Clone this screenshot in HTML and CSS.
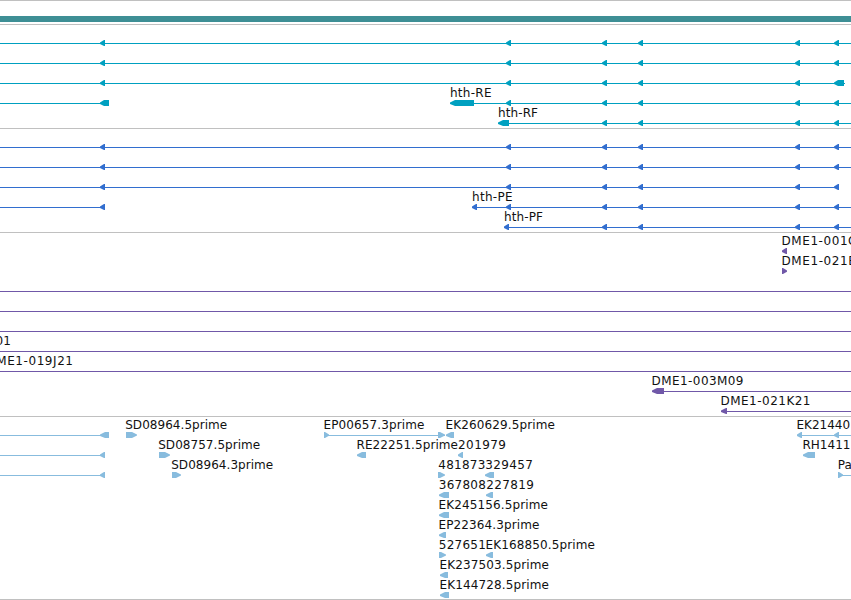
FILE: index.html
```
<!DOCTYPE html>
<html lang="en">
<head>
    <meta charset="UTF-8">
    <title>Genome Browser</title>
    <link rel="stylesheet" href="styles.css">
</head>
<body>
    <svg class="shapes">
        <defs>
            <path id="left" d="M0 17.5L4 15H5V21H4L0 19Z"/>
            <path id="right" d="M0 15H1L5 17.5V18.8L1 21H0Z"/>
            <g id="exons">
                <use href="#left" x="602"/>
                <use href="#left" x="638"/>
                <use href="#left" x="795"/>
            </g>
        </defs>
    </svg>

    <div class="tracks">
        <!-- Gene span -->
        <div class="track span-track">
            <div class="span-bar"></div>
        </div>

        <!-- Transcripts -->
        <div class="track transcripts">
            <svg class="row"><path class="line" d="M0 18.5H851"/><use href="#left" x="100"/><use href="#left" x="506"/><use href="#exons"/><use href="#left" x="834"/></svg>
            <svg class="row"><path class="line" d="M0 18.5H851"/><use href="#left" x="100"/><use href="#left" x="506"/><use href="#exons"/><use href="#left" x="834"/></svg>
            <svg class="row"><path class="line" d="M0 18.5H845"/><use href="#left" x="100"/><use href="#left" x="506"/><use href="#exons"/><path d="M834 17.5l4-2.5h6v6h-6l-4-2z"/></svg>
            <svg class="row">
                <path class="line" d="M0 18.5H105M450 18.5H851"/>
                <path d="M100 17.5l4-2.5h5v6h-5l-4-2zM450 17.5l5-2.5h19v6h-19l-5-2z"/>
                <use href="#left" x="506"/><use href="#exons"/><use href="#left" x="834"/>
                <text x="450" y="12" textLength="41.5">hth-RE</text>
            </svg>
            <svg class="row">
                <path class="line" d="M498 18.5H851"/>
                <path d="M498 17.5l5-2.5h6v6h-6l-5-2z"/>
                <use href="#exons"/><use href="#left" x="834"/>
                <text x="498" y="12" textLength="40">hth-RF</text>
            </svg>
        </div>

        <!-- Proteins -->
        <div class="track proteins">
            <svg class="row"><path class="line" d="M0 18.5H851"/><use href="#left" x="100"/><use href="#left" x="506"/><use href="#exons"/><use href="#left" x="834"/></svg>
            <svg class="row"><path class="line" d="M0 18.5H851"/><use href="#left" x="100"/><use href="#left" x="506"/><use href="#exons"/><use href="#left" x="834"/></svg>
            <svg class="row"><path class="line" d="M0 18.5H839"/><use href="#left" x="100"/><use href="#left" x="506"/><use href="#exons"/><use href="#left" x="834"/></svg>
            <svg class="row">
                <path class="line" d="M0 18.5H105M472 18.5H851"/>
                <use href="#left" x="100"/><use href="#left" x="472"/><use href="#left" x="506"/><use href="#exons"/><use href="#left" x="834"/>
                <text x="472" y="12" textLength="40.5">hth-PE</text>
            </svg>
            <svg class="row">
                <path class="line" d="M504 18.5H851"/>
                <use href="#left" x="504"/><use href="#exons"/><use href="#left" x="834"/>
                <text x="504" y="12" textLength="39">hth-PF</text>
            </svg>
        </div>

        <!-- BAC clones -->
        <div class="track clones">
            <svg class="row"><use href="#left" x="782"/><text x="781.5" y="12" textLength="75">DME1-001C</text></svg>
            <svg class="row"><use href="#right" x="782"/><text x="781.5" y="12" textLength="75">DME1-021B</text></svg>
            <svg class="row"><path class="line" d="M0 18.5H851"/></svg>
            <svg class="row"><path class="line" d="M0 18.5H851"/></svg>
            <svg class="row"><path class="line" d="M0 18.5H851"/></svg>
            <svg class="row"><path class="line" d="M0 18.5H851"/><text x="-4.5" y="12">01</text></svg>
            <svg class="row"><path class="line" d="M0 18.5H851"/><text x="-13.5" y="12" textLength="86.5">DME1-019J21</text></svg>
            <svg class="row"><path class="line" d="M652 18.5H851"/><path d="M652 17.5l5-2.5h7v6h-7l-5-2z"/><text x="651.5" y="12" textLength="92">DME1-003M09</text></svg>
            <svg class="row"><path class="line" d="M721 18.5H851"/><path d="M721 17.5l5-2.5h1v6h-1l-5-2z"/><text x="720.5" y="12" textLength="90">DME1-021K21</text></svg>
        </div>

        <!-- ESTs and insertions -->
        <div class="track ests">
            <svg class="row">
                <path class="line" d="M0 18.5H105M324 18.5H445M797 18.5H851"/>
                <path d="M100 17.5l5-2.5h4v6h-4l-5-2zM126 15h6l5 2.5v1l-5 2.5h-6zM438 15h2l5 2.5v1l-5 2.5h-2zM446 17.5l5-2.5h3v6h-3l-5-2z"/>
                <use href="#right" x="324"/><use href="#left" x="797"/><use href="#left" x="834"/>
                <text x="125.2" y="12" textLength="102">SD08964.5prime</text>
                <text x="323.5" y="12" textLength="101">EP00657.3prime</text>
                <text x="445.5" y="12" textLength="109.5">EK260629.5prime</text>
                <text x="796.5" y="12">EK21440</text>
            </svg>
            <svg class="row">
                <path class="line" d="M0 18.5H105"/>
                <path d="M159 15h6l5 2.5v1l-5 2.5h-6zM357 17.5l5-2.5h4v6h-4l-5-2zM803 17.5l5-2.5h7v6h-7l-5-2z"/>
                <use href="#left" x="100"/><use href="#left" x="458"/>
                <text x="158.2" y="12" textLength="102">SD08757.5prime</text>
                <text x="356.5" y="12" textLength="101.5">RE22251.5prime</text>
                <text x="458" y="12" textLength="48">201979</text>
                <text x="802.5" y="12">RH1411</text>
            </svg>
            <svg class="row">
                <path class="line" d="M0 18.5H105M838 18.5H851"/>
                <path d="M172 15h4l5 2.5v1l-5 2.5h-4zM438 15h2l5 2.5v1l-5 2.5h-2zM485 17.5l5-2.5h4v6h-4l-5-2z"/>
                <use href="#left" x="100"/><use href="#right" x="838"/>
                <text x="171.2" y="12" textLength="102">SD08964.3prime</text>
                <text x="438.3" y="12" textLength="47">481873</text>
                <text x="485.3" y="12" textLength="47.5">329457</text>
                <text x="837.8" y="12">Pa</text>
            </svg>
            <svg class="row">
                <path d="M439 17.5l5-2.5h5v6h-5l-5-2zM486 17.5l5-2.5h2v6h-2l-5-2z"/>
                <text x="438.8" y="12" textLength="47">367808</text>
                <text x="486.3" y="12" textLength="47.5">227819</text>
            </svg>
            <svg class="row"><path d="M439 17.5l5-2.5h5v6h-5l-5-2z"/><text x="438.5" y="12" textLength="109.5">EK245156.5prime</text></svg>
            <svg class="row"><path d="M439 17.5l5-2.5h2v6h-2l-5-2z"/><text x="438.5" y="12" textLength="101">EP22364.3prime</text></svg>
            <svg class="row">
                <path d="M439 15h2l5 2.5v1l-5 2.5h-2zM486 17.5l5-2.5h2v6h-2l-5-2z"/>
                <text x="438.8" y="12" textLength="47">527651</text>
                <text x="485.5" y="12" textLength="109.5">EK168850.5prime</text>
            </svg>
            <svg class="row"><path d="M440 17.5l5-2.5h3v6h-3l-5-2z"/><text x="439.5" y="12" textLength="109.5">EK237503.5prime</text></svg>
            <svg class="row"><path d="M440 17.5l5-2.5h4v6h-4l-5-2z"/><text x="439.5" y="12" textLength="109.5">EK144728.5prime</text></svg>
        </div>
    </div>
</body>
</html>
```
FILE: styles.css
```
* {
    margin: 0;
    padding: 0;
    box-sizing: border-box;
}

body {
    background: #fff;
    overflow: hidden;
    font-family: "DejaVu Sans", sans-serif;
    font-size: 12px;
}

.shapes {
    display: block;
    width: 0;
    height: 0;
}

.tracks {
    width: 851px;
    height: 600px;
    border-bottom: 1px solid #c0c0c0;
    overflow: hidden;
}

.track {
    border-top: 1px solid #c0c0c0;
    padding-bottom: 3px;
}

.span-track {
    height: 24px;
    padding-top: 15px;
}

.span-bar {
    height: 6px;
    background: #3e8f95;
}

.row {
    display: block;
    width: 851px;
    height: 20px;
    overflow: visible;
    fill: currentColor;
}

.row text {
    fill: #111;
}

.line {
    fill: none;
    stroke: currentColor;
    stroke-width: 1;
    shape-rendering: crispEdges;
}

.transcripts {
    color: #00a0c0;
}

.proteins {
    color: #326ecf;
}

.clones {
    color: #7058a8;
}

.ests {
    color: #88bcde;
    padding-bottom: 2px;
}
```
